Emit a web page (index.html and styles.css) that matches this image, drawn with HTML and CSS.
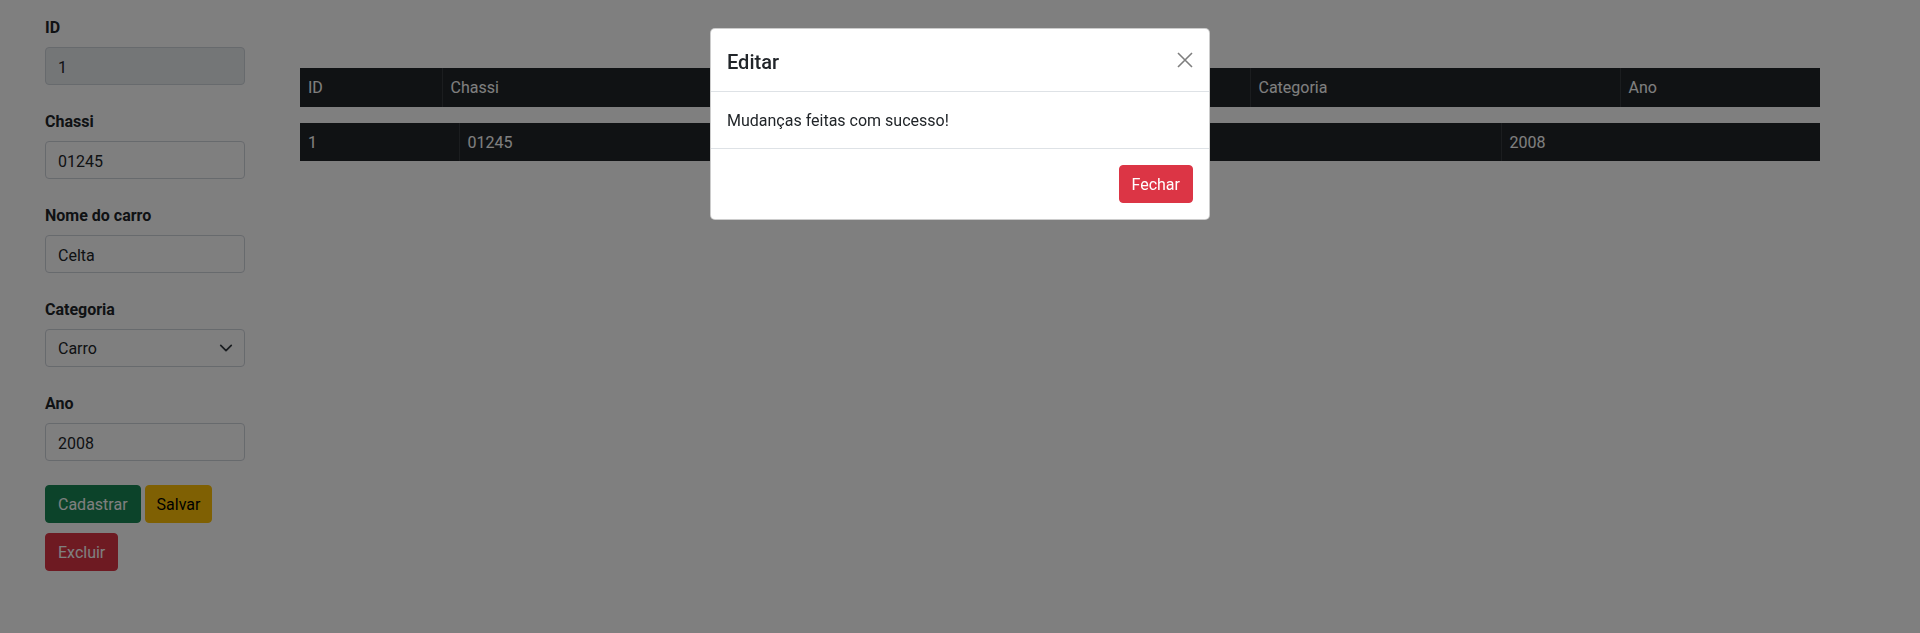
FILE: index.html
```html
<!DOCTYPE html>
<html lang="pt-BR">
<head>
<meta charset="utf-8">
<title>Carros</title>
<link rel="stylesheet" href="styles.css">
</head>
<body>
<div class="page">
  <form class="car-form">
    <div class="field">
      <label class="field-label" for="f-id">ID</label>
      <input class="control" id="f-id" type="text" value="1" disabled>
    </div>
    <div class="field">
      <label class="field-label" for="f-chassi">Chassi</label>
      <input class="control" id="f-chassi" type="text" value="01245">
    </div>
    <div class="field">
      <label class="field-label" for="f-nome">Nome do carro</label>
      <input class="control" id="f-nome" type="text" value="Celta">
    </div>
    <div class="field">
      <label class="field-label" for="f-cat">Categoria</label>
      <div class="select-wrap">
        <select class="control select" id="f-cat">
          <option selected>Carro</option>
          <option>Moto</option>
          <option>Caminhão</option>
        </select>
        <svg class="select-arrow" width="16" height="16" viewBox="0 0 16 16" aria-hidden="true"><path d="M2 5l6 6 6-6" fill="none" stroke="#343a40" stroke-width="2" stroke-linecap="round" stroke-linejoin="round"/></svg>
      </div>
    </div>
    <div class="field">
      <label class="field-label" for="f-ano">Ano</label>
      <input class="control" id="f-ano" type="text" value="2008">
    </div>
    <div class="actions">
      <button type="button" class="btn btn-success">Cadastrar</button>
      <button type="button" class="btn btn-warning">Salvar</button>
      <button type="button" class="btn btn-danger">Excluir</button>
    </div>
  </form>

  <div class="tables">
    <table class="dark-table">
      <thead>
        <tr>
          <th class="h-id">ID</th>
          <th class="h-chassi">Chassi</th>
          <th class="h-nome">Nome do carro</th>
          <th class="h-cat">Categoria</th>
          <th class="h-ano">Ano</th>
        </tr>
      </thead>
    </table>
    <table class="dark-table body-table">
      <tbody>
        <tr>
          <td class="r-id">1</td>
          <td class="r-chassi">01245</td>
          <td class="r-nome">Celta</td>
          <td class="r-cat">Carro</td>
          <td class="r-ano">2008</td>
        </tr>
      </tbody>
    </table>
  </div>
</div>

<div class="backdrop"></div>
<div class="modal-layer">
  <div class="modal-dialog" role="dialog" aria-labelledby="modal-title">
    <div class="modal-header">
      <h5 class="modal-title" id="modal-title">Editar</h5>
      <button type="button" class="btn-close" aria-label="Close">
        <svg width="16" height="16" viewBox="0 0 16 16" aria-hidden="true"><path d="M1 1L15 15M15 1L1 15" stroke="#000" stroke-width="1.6" fill="none"/></svg>
      </button>
    </div>
    <div class="modal-body">Mudanças feitas com sucesso!</div>
    <div class="modal-footer">
      <button type="button" class="btn btn-danger btn-modal">Fechar</button>
    </div>
  </div>
</div>
</body>
</html>
```

FILE: styles.css
```css
* { box-sizing: border-box; }

html, body {
  margin: 0;
  padding: 0;
  background: #fff;
  font-family: "Segoe UI", Roboto, "Noto Sans", "Liberation Sans", sans-serif;
  font-size: 16px;
  line-height: 1.5;
  color: #212529;
}

.page {
  display: grid;
  grid-template-columns: 200px 1fr;
  column-gap: 55px;
  padding: 15px 100px 0 45px;
}

.car-form {
  display: flex;
  flex-direction: column;
}

.field {
  display: flex;
  flex-direction: column;
  margin-bottom: 24px;
}

.field-label {
  font-weight: 700;
  line-height: 24px;
  padding-top: 1px;
  margin-bottom: 7px;
}

.control {
  display: block;
  width: 100%;
  height: 38px;
  padding: 7px 12px 5px;
  font: inherit;
  line-height: 24px;
  color: #212529;
  background: #fff;
  border: 1px solid #ced4da;
  border-radius: 4px;
}

.control:disabled {
  background: #e9ecef;
  color: #212529;
  opacity: 1;
}

.select-wrap {
  position: relative;
}

.select {
  appearance: none;
  -webkit-appearance: none;
  padding-right: 36px;
}

.select-arrow {
  position: absolute;
  right: 12px;
  top: 12px;
  width: 14px;
  height: 14px;
  pointer-events: none;
}

.actions {
  display: flex;
  flex-wrap: wrap;
  column-gap: 4px;
  row-gap: 10px;
}

.btn {
  display: inline-block;
  height: 38px;
  padding: 7px 12px 5px;
  font: inherit;
  line-height: 24px;
  border: 1px solid transparent;
  border-radius: 4px;
  cursor: pointer;
}

.btn-success { background: #198754; border-color: #198754; color: #fff; }
.btn-warning { background: #ffc107; border-color: #ffc107; color: #000; padding-left: 11px; padding-right: 11px; }
.btn-danger  { background: #dc3545; border-color: #dc3545; color: #fff; }

.tables {
  margin-top: 53px;
}

.dark-table {
  width: 100%;
  table-layout: fixed;
  border-collapse: collapse;
  background: #212529;
  color: #fff;
  margin-bottom: 16px;
}

.dark-table th,
.dark-table td {
  padding: 8px 8px 6px;
  text-align: left;
  font-weight: 400;
  line-height: 24px;
  border-left: 1px solid #373b3e;
  white-space: nowrap;
  overflow: hidden;
}

.dark-table th:first-child,
.dark-table td:first-child { border-left: 0; }

.dark-table th { padding-bottom: 7px; }

.h-id { width: 142px; }
.h-chassi { width: 358px; }
.h-nome { width: 450px; }
.h-cat { width: 370px; }
.h-ano { width: 200px; }

.r-id { width: 159px; }
.r-chassi { width: 391px; }
.r-nome { width: 250px; }
.r-cat { width: 401px; }
.r-ano { width: 319px; }

.backdrop {
  position: fixed;
  inset: 0;
  background: rgba(0, 0, 0, 0.5);
}

.modal-layer {
  position: fixed;
  inset: 0;
  display: flex;
  justify-content: center;
  align-items: flex-start;
}

.modal-dialog {
  width: 500px;
  margin-top: 28px;
  background: #fff;
  border: 1px solid rgba(0, 0, 0, 0.2);
  border-radius: 5px;
  display: flex;
  flex-direction: column;
}

.modal-header {
  display: flex;
  align-items: center;
  justify-content: space-between;
  padding: 16px;
  border-bottom: 1px solid #dee2e6;
}

.modal-title {
  margin: 0;
  font-size: 20px;
  font-weight: 500;
  line-height: 30px;
  padding-top: 2px;
  margin-bottom: -2px;
  color: #212529;
}

.btn-close {
  width: 24px;
  height: 24px;
  padding: 4px;
  margin: -4px -4px -4px auto;
  background: transparent;
  border: 0;
  opacity: 0.5;
  display: flex;
  align-items: center;
  justify-content: center;
  cursor: pointer;
}

.modal-body {
  padding: 17px 16px 15px;
  line-height: 24px;
}

.modal-footer {
  display: flex;
  justify-content: flex-end;
  padding: 12px;
  border-top: 1px solid #dee2e6;
}

.btn-modal {
  margin: 4px;
}
```
